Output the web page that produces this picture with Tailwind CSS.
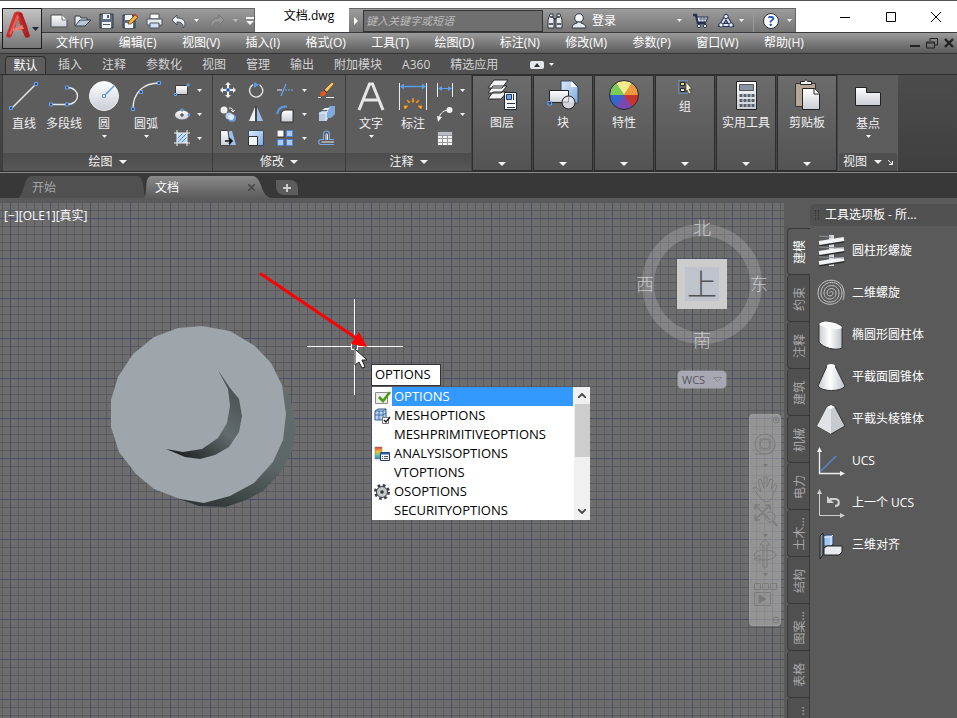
<!DOCTYPE html>
<html lang="zh-CN">
<head>
  <meta charset="UTF-8" />
  <meta name="viewport" content="width=device-width, initial-scale=1.0" />
  <title>文档.dwg</title>
  <script src="https://cdn.jsdelivr.net/npm/@tailwindcss/browser@4"></script>
</head>
<body class="h-screen overflow-hidden flex flex-col bg-[#5a5a5a] font-['Open_Sans','Noto_Sans_CJK_SC',sans-serif] text-xs leading-4 text-[#f0f0f0] select-none">

  <!-- shared shapes -->
  <svg class="absolute h-0 w-0">
    <defs>
      <symbol id="caret" viewBox="0 0 6 4" preserveAspectRatio="none"><path d="M0 0h6L3 4z" fill="#f4f4f4"/></symbol>
      <linearGradient id="white" x1="0" y1="0" x2="0" y2="1"><stop offset="0" stop-color="#fff"/><stop offset="1" stop-color="#c9cdd5"/></linearGradient>
      <linearGradient id="blue" x1="0" y1="0" x2="1" y2="1"><stop offset="0" stop-color="#dcebfa"/><stop offset="1" stop-color="#7fa9dd"/></linearGradient>
      <linearGradient id="metal" x1="0" y1="0" x2="1" y2="0"><stop offset="0" stop-color="#c8ccd1"/><stop offset=".45" stop-color="#fff"/><stop offset="1" stop-color="#bcc1c7"/></linearGradient>
      <linearGradient id="rust" x1="0" y1="0" x2="1" y2="1"><stop offset="0" stop-color="#e8453c"/><stop offset="1" stop-color="#a01a1e"/></linearGradient>
      <linearGradient id="heat" x1="0" y1="0" x2="0" y2="1"><stop offset="0" stop-color="#d93a30"/><stop offset=".4" stop-color="#efc63a"/><stop offset=".7" stop-color="#5cc0a0"/><stop offset="1" stop-color="#3f6fd0"/></linearGradient>
    </defs>
  </svg>

  <header class="flex h-[53px] shrink-0 border-t border-[#555] bg-white">
    <button aria-label="应用程序菜单" class="ml-[2px] mt-[7px] flex h-[41px] w-10 shrink-0 items-center border border-[#1c1c1c] bg-linear-to-b from-[#c4c4c4] to-[#777] z-10">
      <svg class="h-[30px] w-[26px] ml-[2px] -mt-[7px]" viewBox="0 0 26 30">
        <path d="M9 3c2-2 6-2 8 0l8 23c-1 2-4 2-5 1l-3-7H9l-3 7c-1 1-3 1-5-1z" fill="url(#rust)"/>
        <path d="M13 9l3 8-6 1z" fill="#8f8f8f"/>
        <path d="M14 3L6 27l-3 0L11 3z" fill="#c3292b"/>
        <path d="M13 3l8 17 3 5-2-9-5-13z" fill="#b32023"/>
        <path d="M8 19l9-4 2 4-11 2z" fill="#ef7a70"/>
        <path d="M12 4L4 24l2 1L14 7z" fill="#f0857c" opacity=".6"/>
      </svg>
      <svg class="h-1 w-[7px] ml-px" viewBox="0 0 7 4"><path d="M0 0h7L3.500 4z" fill="#222a36"/></svg>
    </button>

    <div class="flex flex-1 flex-col">
      <!-- title bar -->
      <div class="flex h-[31px] items-end">
        <div class="flex h-6 w-[213px] shrink-0 items-center border-t border-r border-[#666] bg-linear-to-b from-[#9c9c9c] to-[#757575] pl-2">
          <button aria-label="新建"><svg class="h-4 w-[18px]" viewBox="0 0 18 16"><path d="M1 2h11l5 5v7H1z" fill="url(#white)" stroke="#4a4a4a"/><path d="M12 2v5h5" fill="#fff" stroke="#777"/></svg></button>
          <button aria-label="打开" class="ml-[6px]"><svg class="h-4 w-[18px]" viewBox="0 0 18 16"><path d="M1 13V3h5l1 2h6v3" fill="#e8ebf0" stroke="#333c48"/><path d="M1 13l5-6h11l-6 6z" fill="#b9c6d6" stroke="#333c48"/></svg></button>
          <button aria-label="保存" class="ml-[7px]"><svg class="h-4 w-[15px]" viewBox="0 0 15 16"><path d="M1 1h13v14H1z" fill="#5f6e80" stroke="#2f3945"/><path d="M4 1h7v5H4zM3 9h9v6H3z" fill="#f2f3f5"/><path d="M8 2h2v3H8zM4 11h7v1H4z" fill="#4d5a6a"/></svg></button>
          <button aria-label="另存为" class="ml-2"><svg class="h-4 w-4" viewBox="0 0 16 16"><path d="M1 2h12v13H1z" fill="#5f6e80" stroke="#2f3945"/><path d="M3 2h7v5H3zM3 10h8v5H3z" fill="#f2f3f5"/><path d="M6 11l1-3 6-6 3 2-7 7z" fill="#f6b13c" stroke="#5a3a14" stroke-width=".7"/><path d="M12 2l1-2 3 3-1 1z" fill="#d5473c"/></svg></button>
          <button aria-label="打印" class="ml-2"><svg class="h-4 w-[17px]" viewBox="0 0 17 16"><path d="M4 1h9v5H4z" fill="#fff" stroke="#555"/><path d="M1 6h15v6H1z" fill="#e6e9ee" stroke="#4c5560"/><path d="M4 10h9v5H4z" fill="#cfe0f4" stroke="#4c5560"/></svg></button>
          <button aria-label="放弃" class="ml-2"><svg class="h-4 w-[15px]" viewBox="0 0 15 16"><path d="M1 7l5-5v3c5 0 8 2 8 6 0 2-1 3-2 4 1-4-2-6-6-6v3z" fill="#eef0f4" stroke="#434c58"/></svg></button>
          <svg class="ml-2 h-[3px] w-[5px]"><use href="#caret"/></svg>
          <button aria-label="重做" class="ml-[11px]"><svg class="h-4 w-[15px]" viewBox="0 0 15 16"><path d="M14 7L9 2v3C4 5 1 7 1 11c0 2 1 3 2 4-1-4 2-6 6-6v3z" fill="#979797" stroke="#777"/></svg></button>
          <svg class="ml-2 h-[3px] w-[5px] opacity-50"><use href="#caret"/></svg>
          <svg class="ml-2 h-2 w-2" viewBox="0 0 8 8"><path d="M0 0h8v2H0zM0 4h8L4 8z" fill="#f4f4f4"/></svg>
        </div>
        <h1 class="flex h-8 w-[94px] shrink-0 items-center justify-center pl-[14px] text-black">文档.dwg</h1>
        <div class="flex h-6 w-[447px] shrink-0 items-center border-t border-r border-[#666] bg-linear-to-b from-[#9c9c9c] to-[#757575]">
          <button aria-label="展开搜索" class="flex w-[14px] justify-center"><svg class="h-2 w-1" viewBox="0 0 4 8"><path d="M0 0l4 4-4 4z" fill="#fff"/></svg></button>
          <input aria-label="搜索" placeholder="键入关键字或短语" class="h-[22px] w-[180px] border border-[#333] bg-[#6f6f6f] px-[2px] text-[11px] italic placeholder:text-[#bdbdbd]" />
          <button aria-label="查找" class="ml-1"><svg class="h-4 w-4" viewBox="0 0 16 16"><path d="M3 1h3v3l1 2v9H1V7zM13 1h-3v3L9 6v9h6V7z" fill="#e6e8ec" stroke="#2d333b"/><path d="M2 11h4M10 11h4M7 6h2M3 4h3M10 4h3" stroke="#2d333b" stroke-width="1.500"/></svg></button>
          <button class="ml-2 flex items-center gap-[5px] text-white"><svg class="h-4 w-4" viewBox="0 0 16 16"><circle cx="8" cy="5" r="4.300" fill="#f5f6f8" stroke="#2f3844"/><path d="M6 9v1c-3 1-5 2-5 5h14c0-3-2-4-5-5V9z" fill="#e6e9ee" stroke="#2f3844"/></svg>登录</button>
          <svg class="ml-[61px] h-[3px] w-[5px]"><use href="#caret"/></svg>
          <button aria-label="应用商店" class="ml-[11px]"><svg class="h-4 w-4" viewBox="0 0 16 16" fill="none" stroke="#26324f"><path d="M0 2h3l2 8h8" stroke-width="2.500"/><path d="M4 4h11l-2 5H5z" fill="#dfe4ee"/><path d="M6 6h8M8 4v5M11 4v5" stroke-width=".6"/><circle cx="6" cy="13" r="1.600" fill="#fff"/><circle cx="12" cy="13" r="1.600" fill="#fff"/></svg></button>
          <button aria-label="Autodesk A360" class="ml-[9px]"><svg class="h-4 w-4" viewBox="0 0 16 16" stroke="#26324f"><path d="M8 4L3 12h10z" fill="none" stroke-width="4"/><path d="M8 4L3 12h10z" fill="none" stroke="#dfe6f2" stroke-width="2"/><circle cx="8" cy="3.500" r="2.200" fill="#e8edf6"/><circle cx="3" cy="12" r="2.200" fill="#e8edf6"/><circle cx="13" cy="12" r="2.200" fill="#e8edf6"/></svg></button>
          <svg class="ml-[5px] h-[3px] w-[5px]"><use href="#caret"/></svg>
          <div class="ml-[9px] h-[22px] w-px bg-[#9a9a9a]"></div>
          <button aria-label="帮助" class="ml-[9px] flex h-4 w-4 items-center justify-center rounded-full border border-[#2b2f38] bg-white text-sm font-bold leading-4 text-[#2355c0]">?</button>
          <svg class="ml-2 h-[3px] w-[5px]"><use href="#caret"/></svg>
        </div>
        <div class="ml-auto flex h-[30px] gap-[2px] text-black">
          <button aria-label="最小化" class="flex w-11 items-center justify-center"><svg class="h-[10px] w-[10px]" viewBox="0 0 10 10"><path d="M0 5.500h10" stroke="#000"/></svg></button>
          <button aria-label="最大化" class="flex w-11 items-center justify-center"><svg class="h-[10px] w-[10px]" viewBox="0 0 10 10"><path d="M.5.500h9v9h-9z" fill="none" stroke="#000"/></svg></button>
          <button aria-label="关闭" class="flex w-[42px] items-center justify-center"><svg class="h-[10px] w-[10px]" viewBox="0 0 10 10"><path d="M0 0l10 10M10 0L0 10" stroke="#000"/></svg></button>
        </div>
      </div>
      <!-- menu bar -->
      <nav class="-ml-[42px] flex h-[21px] items-center border-t border-[#3a3a3a] bg-linear-to-b from-[#9b9b9b] to-[#5c5c5c] pl-14 pr-[3px] text-white whitespace-nowrap">
        <div class="flex w-[748px] justify-between">
          <button>文件(F)</button><button>编辑(E)</button><button>视图(V)</button><button>插入(I)</button><button>格式(O)</button><button>工具(T)</button><button>绘图(D)</button><button>标注(N)</button><button>修改(M)</button><button>参数(P)</button><button>窗口(W)</button><button>帮助(H)</button>
        </div>
        <div class="ml-auto flex items-center gap-[6px]">
          <button aria-label="最小化文档"><svg class="h-3 w-[10px]" viewBox="0 0 10 12"><path d="M0 9h10" stroke="#222" stroke-width="2"/></svg></button>
          <button aria-label="还原文档"><svg class="h-3 w-3" viewBox="0 0 12 12" fill="none" stroke="#222"><path d="M4 4V1.500h7.500V8H9M4 1.500h7.500M.5 5h8v6h-8zM.5 6h8"/></svg></button>
          <button aria-label="关闭文档"><svg class="h-[10px] w-[10px]" viewBox="0 0 10 10"><path d="M1 1l8 8M9 1L1 9" stroke="#222" stroke-width="2.400"/></svg></button>
        </div>
      </nav>
    </div>
  </header>

  <!-- ribbon tabs -->
  <nav class="flex h-[21px] shrink-0 items-center gap-5 border-t border-[#363636] bg-[#525252] pl-[5px] pt-px text-[#d2d2d2] whitespace-nowrap">
    <button class="-mr-2 flex h-[18px] w-[41px] items-center justify-center self-end rounded-t-sm border border-b-0 border-[#2e2e2e] bg-[#5d5d5d] text-white">默认</button>
    <button>插入</button><button>注释</button><button>参数化</button><button>视图</button><button>管理</button><button>输出</button><button>附加模块</button><button>A360</button><button>精选应用</button>
    <button aria-label="最小化功能区" class="ml-3 flex items-center gap-[5px]"><svg class="h-2 w-[14px]" viewBox="0 0 14 8"><rect width="14" height="8" rx="2" fill="#e4e8ee"/><path d="M4 6h6L7 2z" fill="#333"/></svg><svg class="h-[3px] w-[5px]"><use href="#caret"/></svg></button>
  </nav>

  <!-- ribbon panels -->
  <main class="flex h-[98px] shrink-0 border-t border-b border-t-[#2e2e2e] border-b-[#2b2b2b] bg-linear-to-b from-[#4c4c4c] to-[#3f3f3f] pl-[2px]">
    <section class="flex w-[211px] flex-col border-l border-r border-[#3c3c3c] bg-[#5d5d5d]">
      <div class="flex flex-1 pt-[5px] pl-px">
        <button class="flex w-10 flex-col items-center"><svg class="h-8 w-8" viewBox="0 0 32 32" fill="none"><path d="M4 28L28 4" stroke="#e8e8e8" stroke-width="1.400"/><path d="M1.500 26.500h3v3h-3zM26.500 2.500h3v3h-3z" fill="#2e4a73" stroke="#6aa5f5"/></svg><span class="mt-1 whitespace-nowrap">直线</span></button>
        <button class="flex w-10 flex-col items-center"><svg class="h-8 w-8" viewBox="0 0 32 32" fill="none"><path d="M3 24.500h16c14 0 14-17 0-17" stroke="#e8e8e8" stroke-width="1.400"/><path d="M1.500 23h3v3h-3zM17.500 23h3v3h-3zM17.500 6h3v3h-3z" fill="#2e4a73" stroke="#6aa5f5"/></svg><span class="mt-1 whitespace-nowrap">多段线</span></button>
        <button class="flex w-10 flex-col items-center"><svg class="h-8 w-8" viewBox="0 0 32 32"><circle cx="16" cy="16" r="14.500" fill="url(#white)" stroke="#f0f0f0"/><path d="M16 16L26 6" stroke="#5b98ea" stroke-width="1.500"/><path d="M14.500 14.500h3v3h-3z" fill="#fff" stroke="#5b98ea"/></svg><span class="mt-1">圆</span><svg class="mt-[3px] h-[3px] w-[5px]"><use href="#caret"/></svg></button>
        <button class="flex w-11 flex-col items-center"><svg class="h-8 w-8" viewBox="0 0 32 32" fill="none"><path d="M3 29C3 13 13 3 29 3" stroke="#e8e8e8" stroke-width="1.400"/><path d="M1.500 27.500h3v3h-3zM9.500 10.500h3v3h-3zM27.500 1.500h3v3h-3z" fill="#2e4a73" stroke="#6aa5f5"/></svg><span class="mt-1">圆弧</span><svg class="mt-[3px] h-[3px] w-[5px]"><use href="#caret"/></svg></button>
        <div class="ml-1 grid grid-cols-[20px_14px] auto-rows-[24px] -mt-[2px] place-items-center">
          <svg class="h-4 w-4" viewBox="0 0 16 16"><path d="M1.500 3.500h12v9h-12z" fill="url(#white)" stroke="#3a3a3a"/><path d="M.5 11.500h2v2h-2zM13 2h2v2h-2z" fill="#2e4a73" stroke="#6aa5f5"/></svg><svg class="h-[3px] w-[5px]"><use href="#caret"/></svg>
          <svg class="h-4 w-4" viewBox="0 0 16 16"><ellipse cx="8" cy="9" rx="7" ry="4.500" fill="url(#white)"/><path d="M6 9h4M8 7v4" stroke="#333"/><path d="M7 3h2v2H7zM14 8h1.500v2H14z" fill="#2e4a73" stroke="#6aa5f5"/></svg><svg class="h-[3px] w-[5px]"><use href="#caret"/></svg>
          <svg class="h-4 w-4" viewBox="0 0 16 16"><path d="M3 3h10v10H3z" fill="#c3dcf8"/><path d="M3 9l6-6M3 13L13 3M7 13l6-6" stroke="#4f86d8"/><path d="M3 0v16M13 0v16M0 3h16M0 13h16" stroke="#f2f2f2"/></svg><svg class="h-[3px] w-[5px]"><use href="#caret"/></svg>
        </div>
      </div>
      <button class="flex h-[18px] items-center justify-center gap-[6px] bg-linear-to-b from-[#4c4c4c] to-[#575757]">绘图<svg class="h-1 w-2"><use href="#caret"/></svg></button>
    </section>

    <section class="flex w-[133px] flex-col border-r border-[#3c3c3c] bg-[#5d5d5d]">
      <div class="grid flex-1 grid-cols-[28px_28px_30px_8px_36px] auto-rows-[24px] place-items-center pl-px pt-[3px]">
        <svg class="h-4 w-4" viewBox="0 0 16 16"><path d="M8 0l3 3H9v3H7V3H5zM8 16l3-3H9v-3H7v3H5zM0 8l3-3v2h3v2H3v2zM16 8l-3-3v2h-3v2h3v2z" fill="#eee"/><path d="M6.500 6.500h3v3h-3z" fill="#2e4a73" stroke="#6aa5f5"/></svg>
        <svg class="h-4 w-4" viewBox="0 0 16 16"><path d="M11.500 2.800A6.600 6.600 0 1 1 5 2.700" fill="none" stroke="#e4e4e4" stroke-width="1.400"/><path d="M6 0l5 2.500L6 6z" fill="#5b98ea"/></svg>
        <svg class="h-4 w-4" viewBox="0 0 16 16"><path d="M0 8h5" stroke="#eee"/><path d="M4 14L9 2M8 8h2M11 8h2M14 8h2" stroke="#6aa5f5" stroke-width="1.200"/></svg>
        <svg class="h-[3px] w-[5px]"><use href="#caret"/></svg>
        <svg class="h-4 w-4" viewBox="0 0 16 16"><path d="M0 15.500h3M8 15.500h8" stroke="#eee"/><path d="M6 8l8-8 2 2-7 8z" fill="#f7c662" stroke="#523413" stroke-width=".6"/><path d="M2 14l1-4 4-2 2 3-3 3z" fill="#dd5a1e"/><path d="M6 8l3 3" stroke="#2b2b2b"/></svg>

        <svg class="h-4 w-4" viewBox="0 0 16 16"><circle cx="4" cy="4" r="3.500" fill="#eef0f3"/><circle cx="9" cy="10" r="3.500" fill="#b5cdeb"/><circle cx="12" cy="12" r="4" fill="#6c99d8"/><circle cx="11" cy="11" r="3" fill="#dce9f8"/><path d="M9 2c3 0 4 1 4 3m-2-1l2 2 2-2" fill="none" stroke="#eee"/></svg>
        <svg class="h-4 w-4" viewBox="0 0 16 16"><path d="M7 1v14H1z" fill="#eef0f3"/><path d="M9 1v14h6z" fill="#9cbde8"/><path d="M8 0v16" stroke="#333"/></svg>
        <svg class="h-[18px] w-[18px]" viewBox="0 0 18 18"><path d="M5 17V10c0-3 2-5 6-5h6v12z" fill="url(#white)" stroke="#2e2e2e"/><path d="M1 9C2 4 5 1 11 1.500" fill="none" stroke="#5b98ea" stroke-width="2"/></svg>
        <svg class="h-[3px] w-[5px]"><use href="#caret"/></svg>
        <svg class="h-4 w-[17px]" viewBox="0 0 17 16"><path d="M1 7l3-2h6v8l-2 2H1z" fill="#b7cbe3"/><path d="M9 3l3-3h5v8l-4 4H9z" fill="#82a9dc"/><path d="M1 7h7v8M8 7l2-2" stroke="#eef3fa" fill="none"/><path d="M4 4h6l2-2H7z" fill="#e9eff7"/></svg>

        <svg class="h-4 w-4" viewBox="0 0 16 16"><path d="M9 1h3l4 14H9z" fill="#9cc0ee"/><path d="M.5.500H8l2 15H.5z" fill="url(#white)" stroke="#444"/><path d="M5 11h7M9 8l3 3-3 3" stroke="#111" stroke-width="1.600" fill="none"/></svg>
        <svg class="h-4 w-4" viewBox="0 0 16 16"><path d="M.5.500h15v15H.5z" fill="url(#blue)" stroke="#3a4a60"/><path d="M.5 6.500h9v9h-9z" fill="#f3f4f6" stroke="#333"/></svg>
        <svg class="h-4 w-4" viewBox="0 0 16 16"><path d="M0 0h7v7H0z" fill="#fff" stroke="#3a3a3a"/><path d="M9.500.500h6v6h-6zM.5 9.500h6v6h-6zM9.500 9.500h6v6h-6z" fill="#a9c8f2" stroke="#4c84d8"/></svg>
        <svg class="h-[3px] w-[5px]"><use href="#caret"/></svg>
        <svg class="h-4 w-4" viewBox="0 0 16 16" fill="none"><path d="M16 14.500H3c-3 0-3-5 0-5h2.500V4c0-4 6-4 6 0v5.500H16" stroke="#76a8ee" stroke-width="1.200"/><path d="M16 12H3.500M8 10V4.500c0-1 1.500-1 1.500 0V10" stroke="#eee"/></svg>
      </div>
      <button class="flex h-[18px] items-center justify-center gap-[6px] bg-linear-to-b from-[#4c4c4c] to-[#575757]">修改<svg class="h-1 w-2"><use href="#caret"/></svg></button>
    </section>

    <section class="flex w-[125px] flex-col bg-[#5d5d5d]">
      <div class="flex flex-1 pl-1 pt-[5px]">
        <button class="flex w-[42px] flex-col items-center"><svg class="h-8 w-8" viewBox="0 0 32 32"><path d="M4 30L14.500 4h3L28 30M8 20h16" fill="none" stroke="#e6e6e6" stroke-width="3"/></svg><span class="mt-1">文字</span><svg class="mt-[3px] h-[3px] w-[5px]"><use href="#caret"/></svg></button>
        <button class="flex w-[42px] flex-col items-center"><svg class="h-8 w-8" viewBox="0 0 32 32"><path d="M2.500 3v27M29.500 3v27" stroke="#eee"/><path d="M4 6.500h24" stroke="#5b9cf5" stroke-width="1.500"/><path d="M3 6.500l4-3v6zM29 6.500l-4-3v6z" fill="#5b9cf5"/><path d="M16 18l-1 4h2zM10 20l2 3 1-1zM22 20l-2 3-1-1zM7 26l4 0-3 3zM25 26l-4 0 3 3z" fill="#ffc02a" stroke="#f08a14"/></svg><span class="mt-1">标注</span></button>
        <div class="-mt-[2px] grid auto-rows-[24px] grid-cols-[22px_12px] place-items-center">
          <svg class="h-4 w-4" viewBox="0 0 16 16"><path d="M.5 1v14M15.500 1v14" stroke="#eee"/><path d="M2 6.500h12" stroke="#5b9cf5"/><path d="M1 6.500l4-2.500v5zM15 6.500l-4-2.500v5z" fill="#5b9cf5"/></svg><svg class="h-[3px] w-[5px]"><use href="#caret"/></svg>
          <svg class="h-4 w-4" viewBox="0 0 16 16"><path d="M2 12c1-4 3-7 9-8" fill="none" stroke="#eee"/><circle cx="12.500" cy="4" r="3" fill="#f4f4f4"/><path d="M0 10l5 1-4 5z" fill="#eee"/></svg><svg class="h-[3px] w-[5px]"><use href="#caret"/></svg>
          <svg class="h-[15px] w-4" viewBox="0 0 16 15"><path d="M.5.500h15v14H.5z" fill="#f4f4f4" stroke="#666"/><path d="M1 1h14v3H1z" fill="#b9bec6"/><path d="M1 4.500h14M1 7.500h14M1 11.500h14M5.500 4v10M10.500 4v10" stroke="#999"/></svg>
        </div>
      </div>
      <button class="flex h-[18px] items-center justify-center gap-[6px] bg-linear-to-b from-[#4c4c4c] to-[#575757]">注释<svg class="h-1 w-2"><use href="#caret"/></svg></button>
    </section>

    <div class="flex gap-px bg-[#454545] pl-px pr-px">
      <button class="flex w-[60px] flex-col items-center border border-[#2e2e2e] bg-linear-to-b from-[#6c6c6c] to-[#535353] pt-[3px]">
        <svg class="h-8 w-8" viewBox="0 0 32 32"><path d="M2 20l5-7h14l-6 7zM2 14l5-7h14l-6 7zM2 9l6-8h14l-6 8z" fill="#f4f5f7" stroke="#2c2c2c"/><path d="M18.500 13.500h12v17h-12z" fill="#f2f4f8" stroke="#1f2733"/><path d="M20.500 15.500h5v5h-5z" fill="#6fa2ea" stroke="#1f3a66"/><path d="M27.500 15v6M21 24.500h8M21 28.500h8" stroke="#333"/></svg>
        <span class="mt-1">图层</span><svg class="mt-auto mb-1 h-1 w-2"><use href="#caret"/></svg></button>
      <button class="flex w-[60px] flex-col items-center border border-[#2e2e2e] bg-linear-to-b from-[#6c6c6c] to-[#535353] pt-[3px]">
        <svg class="h-8 w-8" viewBox="0 0 32 32"><path d="M14 2h11l6 6v16H14z" fill="url(#blue)" stroke="#33485f"/><path d="M24 2v6h6" fill="#fff"/><path d="M2.500 11.500h19v12h-19z" fill="url(#white)" stroke="#222"/><circle cx="21.500" cy="23.500" r="6.500" fill="#e6e9ee" fill-opacity=".85" stroke="#222"/><path d="M16 23h5.500v-6" fill="none" stroke="#888" stroke-width=".7"/><path d="M1 22.500h3.500v3.500H1z" fill="#2e4a73" stroke="#6aa5f5"/></svg>
        <span class="mt-1">块</span><svg class="mt-auto mb-1 h-1 w-2"><use href="#caret"/></svg></button>
      <button class="flex w-[60px] flex-col items-center border border-[#2e2e2e] bg-linear-to-b from-[#6c6c6c] to-[#535353] pt-[3px]">
        <svg class="h-8 w-8" viewBox="0 0 32 32"><path d="M16 16L8 4A14 14 0 0 1 24 4z" fill="#f3ea8c"/><path d="M16 16l8-12a14 14 0 0 1 6 12z" fill="#ee9a3a"/><path d="M16 16h14a14 14 0 0 1-6 12z" fill="#c8352f"/><path d="M16 16l8 12a14 14 0 0 1-16 0z" fill="#7a48b4"/><path d="M16 16L8 28A14 14 0 0 1 2 16z" fill="#3566cc"/><path d="M16 16H2A14 14 0 0 1 8 4z" fill="#7ccc5a"/><circle cx="16" cy="16" r="14.500" fill="none" stroke="#2a2a2a"/></svg>
        <span class="mt-1">特性</span><svg class="mt-auto mb-1 h-1 w-2"><use href="#caret"/></svg></button>
      <button class="flex w-[60px] flex-col items-center border border-[#2e2e2e] bg-linear-to-b from-[#6c6c6c] to-[#535353] pt-[3px]">
        <svg class="h-4 w-4" viewBox="0 0 16 16"><path d="M1.500 1.500h9v13h-9z" fill="none" stroke="#6aa5f5" stroke-dasharray="1 1"/><path d="M3.500 3.500h4v3h-4z" fill="#f0de6a" stroke="#222"/><path d="M3.500 9.500h4v3h-4z" fill="#e8ecf4" stroke="#222"/><path d="M9 3l6 7h-3l2 4-2 1-2-4-1 2z" fill="#fbf6c8" stroke="#222" stroke-width=".6"/></svg>
        <span class="mt-1">组</span><svg class="mt-auto mb-1 h-1 w-2"><use href="#caret"/></svg></button>
      <button class="flex w-[60px] flex-col items-center border border-[#2e2e2e] bg-linear-to-b from-[#6c6c6c] to-[#535353] pt-[3px]">
        <svg class="h-8 w-8" viewBox="0 0 32 32"><path d="M6.500 2.500h20v28h-20z" fill="url(#white)" stroke="#222"/><path d="M9.500 5.500h14v6h-14z" fill="#8a93a0" stroke="#555"/><path d="M11 15v14M15 15v14M19 15v14M23 15v14" stroke="#59616c" stroke-width="3" stroke-dasharray="3 2"/></svg>
        <span class="mt-1 whitespace-nowrap">实用工具</span><svg class="mt-auto mb-1 h-1 w-2"><use href="#caret"/></svg></button>
      <button class="flex w-[60px] flex-col items-center border border-[#2e2e2e] bg-linear-to-b from-[#6c6c6c] to-[#535353] pt-[3px]">
        <svg class="h-8 w-8" viewBox="0 0 32 32"><path d="M4.500 4.500h20v23h-20z" fill="#b5a696" stroke="#3a332c"/><path d="M9.500 2.500h4c0-2 3-2 3 0h4v3h-11z" fill="#f4f4f4" stroke="#222"/><path d="M11.500 9.500h12l5 5v16h-17z" fill="url(#white)" stroke="#222"/><path d="M23 9.500v5.500h5.500" fill="#fff" stroke="#222"/></svg>
        <span class="mt-1 whitespace-nowrap">剪贴板</span><svg class="mt-auto mb-1 h-1 w-2"><use href="#caret"/></svg></button>
    </div>

    <section class="flex w-[60px] flex-col bg-[#5d5d5d]">
      <button class="flex flex-1 flex-col items-center pt-[5px]"><svg class="h-8 w-8" viewBox="0 0 32 32"><path d="M3.500 7.500h11v5h14v13h-25z" fill="url(#white)" stroke="#222"/></svg><span class="mt-1">基点</span><svg class="mt-[3px] h-[3px] w-[5px]"><use href="#caret"/></svg></button>
      <button class="mx-px flex h-[18px] items-center justify-between bg-[#4f4f4f] px-1">视图<svg class="h-1 w-2"><use href="#caret"/></svg><svg class="h-[5px] w-[5px]" viewBox="0 0 5 5"><path d="M0 0l4 4M4.500 1v3.500H1" stroke="#f0f0f0" fill="none"/></svg></button>
    </section>
  </main>

  <!-- drawing file tabs -->
  <nav class="flex h-[26px] shrink-0 items-end border-t border-[#8c8c8c] bg-[#383838] pl-[18px]">
    <button class="relative flex h-[22px] w-[128px] items-center pl-[14px] pt-px text-[#a5a5a5]">
      <svg class="absolute inset-0 h-full w-full" viewBox="0 0 128 22" preserveAspectRatio="none"><path d="M0 22C6 20 5 2 13 0H120c7 2 5 20 8 22z" fill="#505050"/></svg><span class="relative">开始</span>
    </button>
    <button class="relative -ml-[3px] flex h-[22px] w-[128px] items-center justify-between pl-3 pr-4 pt-px text-white">
      <svg class="absolute inset-0 h-full w-full" viewBox="0 0 128 22" preserveAspectRatio="none"><defs><linearGradient id="tab" x1="0" y1="0" x2="0" y2="1"><stop offset="0" stop-color="#8a8a8a"/><stop offset="1" stop-color="#5c5c5c"/></linearGradient></defs><path d="M0 22C6 20 0 2 8 0H110c10 2 7 20 18 22z" fill="url(#tab)"/></svg>
      <span class="relative">文档</span>
      <svg class="relative h-[7px] w-[7px]" viewBox="0 0 7 7"><path d="M0 0l7 7M7 0L0 7" stroke="#444" stroke-width="1.500"/></svg>
    </button>
    <button aria-label="新图形" class="mb-[3px] ml-[5px] flex h-[15px] w-[22px] items-center justify-center rounded-tr-lg rounded-bl-lg bg-[#5c5c5c]"><svg class="h-2 w-2" viewBox="0 0 8 8"><path d="M4 0v8M0 4h8" stroke="#ccc" stroke-width="2"/></svg></button>
  </nav>

  <div class="flex min-h-0 flex-1 pt-1">
    <!-- drawing area -->
    <div class="relative min-w-0 flex-1 overflow-hidden bg-[#6d6d6e]">
      <svg class="absolute inset-0 h-full w-full">
        <g id="grid"></g>
        <defs>
          <linearGradient id="side" x1="280" y1="100" x2="200" y2="310" gradientUnits="userSpaceOnUse"><stop offset="0" stop-color="#3e4648"/><stop offset=".3" stop-color="#66706f"/><stop offset=".7" stop-color="#5b6566"/><stop offset="1" stop-color="#2c3133"/></linearGradient>
          <linearGradient id="notch" x1="230" y1="170" x2="168" y2="248" gradientUnits="userSpaceOnUse"><stop offset="0" stop-color="#434a4c"/><stop offset=".5" stop-color="#626c6e"/><stop offset="1" stop-color="#1d2022"/></linearGradient>
        </defs>
        <path d="M270 161l13 22 8 15 5 27-4 24-11 21-18 19-17 9-20 7-27-1-20-7z" fill="url(#side)"/>
        <path d="M202 124l28 5 25 15 16 17 11 22 4 29-3 26-10 22-19 21-24 13-26 7-24-4-26-10-18-15-17-22-8-25v-27l7-23 15-23 21-17 24-9z" fill="#9ea6ab"/>
        <path d="M218 168l12 18 9 11 3 17-3 16-10 15-14 8-15 4-15-2-19-8 17 3 19-3 16-11 9-15 3-17-2-17z" fill="url(#notch)"/>
        <path d="M307 144.500h44M358 144.500h45M354.500 97v44M354.500 148v45M351.500 141.500h6v6h-6z" fill="none" stroke="#fff"/>
        <path d="M261 72l98 66" stroke="#fe0000" stroke-width="3" stroke-linecap="round"/>
        <path d="M367 145l-16-3 8-12z" fill="#fe0000"/>
        <path d="M355 147v16l4-3 3 6 3-1-3-7h5z" fill="#fff" stroke="#222"/>
      </svg>

      <button class="absolute left-1 top-[6px] text-white">[−][OLE1][真实]</button>

      <!-- view cube -->
      <div class="absolute right-[15px] top-[14px] grid grid-cols-[20px_94px_20px] grid-rows-[24px_88px_24px] place-items-center text-lg leading-5 text-[#c0c0c0] font-light">
        <div class="absolute h-[120px] w-[120px] rounded-full border-12 border-white/17"></div>
        <span class="col-start-2">北</span>
        <span class="col-start-1 row-start-2">西</span>
        <button class="col-start-2 row-start-2 flex h-[50px] w-[50px] items-center justify-center border-8 border-[#cdcdcd] bg-[#bfc3cb] text-3xl font-light text-[#505258]">上</button>
        <span class="col-start-3 row-start-2">东</span>
        <span class="col-start-2 row-start-3">南</span>
      </div>
      <button class="absolute right-[58px] top-[169px] flex h-[17px] w-12 items-center justify-around rounded bg-[#a8a8b2] text-[11px] text-[#55555f] ring-1 ring-white/20">WCS<svg class="h-[5px] w-[9px]" viewBox="0 0 9 5"><path d="M.5.500h8l-4 4z" fill="none" stroke="#888"/></svg></button>

      <!-- navigation bar -->
      <div class="absolute right-[3px] top-[212px] flex h-[212px] w-8 flex-col items-center rounded border border-[#aaa]/50 bg-[#b4b4b4]/55">
        <svg class="h-[210px] w-[30px]" viewBox="0 0 30 210" fill="none" stroke="#7c7c7c">
          <circle cx="26" cy="5" r="3"/><path d="M25 4l2 2M27 4l-2 2"/>
          <circle cx="15" cy="29" r="10"/><circle cx="15" cy="29" r="5"/><path d="M5 39h10c6 0 10-4 10-10M10 24h10v10H10z"/>
          <path d="M13 49h5l-2.500 3zM13 119h5l-2.500 3zM13 158h5l-2.500 3z" fill="#777" stroke="none"/>
          <path d="M10 82l-7-9 3-1 5 5-3-12 3-1 3 9V62h3v10l3-8 3 1-2 10 4-6 2 2-5 12c-2 5-8 5-12-1z"/>
          <path d="M5 90l15 15M20 90L5 105M5 95v-5h5M15 90h5v5M5 100v5h5" stroke-width="1.500"/><circle cx="20" cy="102" r="5"/><path d="M23 106l4 5" stroke-width="2"/>
          <path d="M13 152v-22h-3l5-6 5 6h-3v22z"/><ellipse cx="15" cy="140" rx="11" ry="5"/><path d="M4 144l6-4v7z"/>
          <path d="M4.500 168.500h6v6h-6zM12.500 168.500h6v6h-6zM20.500 168.500h6v6h-6zM4.500 177.500h16v13h-16z"/><path d="M9 180l7 4-7 4z" fill="#777"/>
          <circle cx="26" cy="205" r="3"/><path d="M24 205h4"/>
        </svg>
      </div>

      <!-- dynamic input -->
      <input aria-label="命令" value="OPTIONS" class="absolute left-[371px] top-[162px] h-[22px] w-[70px] border border-[#333] bg-white px-[3px] pb-[2px] text-[13px] text-black" />
      <div class="absolute left-[372px] top-[185px] flex w-[218px] bg-white text-[13px] leading-[19px] text-black">
        <ul class="flex-1">
          <li class="flex h-[19px]"><svg class="m-[2px] mr-0 h-4 w-[18px]" viewBox="0 0 18 16"><path d="M1.500 3.500h12v11h-12z" fill="#ececec" stroke="#8a8a8a"/><path d="M5 8l4 4 7-9" fill="none" stroke="#4a9a10" stroke-width="2.500"/></svg><span class="flex-1 bg-[#3399ff] pl-[2px] text-white">OPTIONS</span></li>
          <li class="flex h-[19px]"><svg class="m-[2px] mr-0 h-4 w-[18px]" viewBox="0 0 18 16"><path d="M1 3l3-2h8v8l-3 3H1z" fill="#b8d2f2" stroke="#34598c"/><path d="M1 3h8v9M9 3l3-2M5 3v9M1 7h8l3-2" fill="none" stroke="#34598c" stroke-width=".8"/><path d="M8.500 9.500h6v6h-6z" fill="#fff" stroke="#777"/><path d="M10 12l2 2 4-5" fill="none" stroke="#222" stroke-width="1.500"/></svg><span class="pl-[2px]">MESHOPTIONS</span></li>
          <li class="h-[19px] pl-[22px]">MESHPRIMITIVEOPTIONS</li>
          <li class="flex h-[19px]"><svg class="m-[2px] mr-0 h-4 w-[18px]" viewBox="0 0 18 16"><path d="M1 1h7v12H1z" fill="url(#heat)" stroke="#888" stroke-width=".6"/><path d="M6.500 6.500h9v8h-9z" fill="#f6f8fb" stroke="#1f3a66"/><path d="M6.500 7.500h9" stroke="#2f5fa8" stroke-width="2"/><path d="M8 10.500h1M8 12.500h1M10 10.500h4M10 12.500h4" stroke="#555"/></svg><span class="pl-[2px]">ANALYSISOPTIONS</span></li>
          <li class="h-[19px] pl-[22px]">VTOPTIONS</li>
          <li class="flex h-[19px]"><svg class="m-[2px] mr-0 h-4 w-[18px]" viewBox="0 0 18 16"><circle cx="8" cy="8" r="6.500" fill="none" stroke="#3c3f44" stroke-width="3" stroke-dasharray="2.600 2.500"/><circle cx="8" cy="8" r="5.500" fill="#c3c6ca" stroke="#3c3f44"/><circle cx="8" cy="8" r="1.800" fill="#333"/></svg><span class="pl-[2px]">OSOPTIONS</span></li>
          <li class="h-[19px] pl-[22px]">SECURITYOPTIONS</li>
        </ul>
        <div class="ml-px flex w-4 flex-col items-center bg-[#f0f0f0]">
          <svg class="my-[6px] h-[5px] w-2" viewBox="0 0 8 5"><path d="M0 5l4-4 4 4" fill="none" stroke="#444" stroke-width="1.800"/></svg>
          <div class="h-[53px] w-[15px] bg-[#cdcdcd]"></div>
          <svg class="mt-auto mb-[6px] h-[5px] w-2" viewBox="0 0 8 5"><path d="M0 0l4 4 4-4" fill="none" stroke="#444" stroke-width="1.800"/></svg>
        </div>
      </div>
    </div>

    <!-- tool palettes -->
    <aside class="flex w-[173px] shrink-0 pl-[3px]">
      <div class="mt-[26px] flex w-[23px] flex-col text-[#a9a9a9]">
        <button class="flex h-[47px] shrink-0 items-center justify-center rounded-l border border-r-0 border-[#383838] bg-[#5a5a5a] pl-[2px] pt-[2px] text-white"><span class="rotate-180 [writing-mode:vertical-rl] [text-orientation:sideways]">建模</span></button>
        <button class="flex h-[47px] shrink-0 items-center justify-center rounded-l border border-t-0 border-[#383838] bg-[#505050] pl-[2px] pt-[2px]"><span class="rotate-180 [writing-mode:vertical-rl] [text-orientation:sideways]">约束</span></button>
        <button class="flex h-[47px] shrink-0 items-center justify-center rounded-l border border-t-0 border-[#383838] bg-[#505050] pl-[2px] pt-[2px]"><span class="rotate-180 [writing-mode:vertical-rl] [text-orientation:sideways]">注释</span></button>
        <button class="flex h-[47px] shrink-0 items-center justify-center rounded-l border border-t-0 border-[#383838] bg-[#505050] pl-[2px] pt-[2px]"><span class="rotate-180 [writing-mode:vertical-rl] [text-orientation:sideways]">建筑</span></button>
        <button class="flex h-[47px] shrink-0 items-center justify-center rounded-l border border-t-0 border-[#383838] bg-[#505050] pl-[2px] pt-[2px]"><span class="rotate-180 [writing-mode:vertical-rl] [text-orientation:sideways]">机械</span></button>
        <button class="flex h-[47px] shrink-0 items-center justify-center rounded-l border border-t-0 border-[#383838] bg-[#505050] pl-[2px] pt-[2px]"><span class="rotate-180 [writing-mode:vertical-rl] [text-orientation:sideways]">电力</span></button>
        <button class="flex h-[47px] shrink-0 items-center justify-center rounded-l border border-t-0 border-[#383838] bg-[#505050] pl-[2px] pt-[2px]"><span class="rotate-180 [writing-mode:vertical-rl] [text-orientation:sideways]">土木...</span></button>
        <button class="flex h-[47px] shrink-0 items-center justify-center rounded-l border border-t-0 border-[#383838] bg-[#505050] pl-[2px] pt-[2px]"><span class="rotate-180 [writing-mode:vertical-rl] [text-orientation:sideways]">结构</span></button>
        <button class="flex h-[47px] shrink-0 items-center justify-center rounded-l border border-t-0 border-[#383838] bg-[#505050] pl-[2px] pt-[2px]"><span class="rotate-180 [writing-mode:vertical-rl] [text-orientation:sideways]">图案...</span></button>
        <button class="flex h-[47px] shrink-0 items-center justify-center rounded-l border border-t-0 border-[#383838] bg-[#505050] pl-[2px] pt-[2px]"><span class="rotate-180 [writing-mode:vertical-rl] [text-orientation:sideways]">表格</span></button>
        <button class="flex h-[47px] shrink-0 items-start justify-center rounded-l border border-t-0 border-[#383838] bg-[#505050] pl-[2px] pt-2"><span class="rotate-180 [writing-mode:vertical-rl] [text-orientation:sideways]">...</span></button>
      </div>
      <div class="flex-1 text-white">
        <h2 class="mt-[2px] flex h-[22px] items-center gap-[6px] rounded-l bg-[#505050] pl-[5px] whitespace-nowrap"><span class="h-[10px] w-1 border-x border-dotted border-[#333]"></span>工具选项板 - 所...</h2>
        <ul class="mt-1 pl-[6px]">
          <li class="flex h-[42px] items-center gap-[6px]"><svg class="h-8 w-[30px]" viewBox="0 0 30 32"><path d="M13 0h5v31h-5z" fill="#d4d7db"/><path d="M3 9l25-4M3 19l25-4M3 29l25-4" stroke="#2c2c2c" stroke-width="5"/><path d="M3 8l25-4M3 18l25-4M3 28l25-4" stroke="#f2f3f5" stroke-width="4"/><path d="M3 1l12 1M3 12l25 1M3 22l25 1" stroke="#8d9298"/></svg>圆柱形螺旋</li>
          <li class="flex h-[42px] items-center gap-[6px]"><svg class="h-7 w-[30px]" viewBox="0 0 30 28" fill="none" stroke="#c6c6c6"><path d="M14 14c0-2 3-2 3 0 0 4-6 4-6 0 0-6 9-6 9 0 0 8-12 8-12 0C8 4 23 4 23 14c0 12-18 12-18 0C5 0 26 0 26 14c0 15-24 15-24 0C2-3 28-3 28 14c0 3 0 5-1 7"/></svg>二维螺旋</li>
          <li class="flex h-[42px] items-center gap-[6px]"><svg class="h-8 w-[30px]" viewBox="0 0 30 32"><path d="M3 5c0 0 4-4 11-2 7 1 12 4 12 6v20c-6 3-19 0-23-6z" fill="url(#metal)" stroke="#333"/><path d="M3 5c0 0 4-4 11-2 7 1 12 4 12 6-6 3-19 0-23-4z" fill="#fafafa"/></svg>椭圆形圆柱体</li>
          <li class="flex h-[42px] items-center gap-[6px]"><svg class="h-8 w-[30px]" viewBox="0 0 30 32"><path d="M11 5c1-2 7-2 8 0l10 20c-3 6-24 6-27 0z" fill="url(#metal)" stroke="#333"/><ellipse cx="15" cy="5" rx="4" ry="2" fill="#fff"/></svg>平截面圆锥体</li>
          <li class="flex h-[42px] items-center gap-[6px]"><svg class="h-8 w-[30px]" viewBox="0 0 30 32"><path d="M11 4l4-2 4 2 10 19-14 8L1 23z" fill="#c6cacf" stroke="#333"/><path d="M11 4l4 2v25L1 23z" fill="#e0e2e6"/><path d="M11 4l4-2 4 2-4 2z" fill="#fff"/></svg>平截头棱锥体</li>
          <li class="flex h-[42px] items-center gap-[6px]"><svg class="h-8 w-[30px]" viewBox="0 0 30 32"><path d="M3 28L20 11" stroke="#4f86d8" stroke-width="1.500"/><path d="M3.500 5v23.500H26" fill="none" stroke="#f0f0f0" stroke-width="1.300"/><path d="M3.500 2L1 7h5zM29 28.500L24 26v5z" fill="#f0f0f0"/></svg>UCS</li>
          <li class="flex h-[42px] items-center gap-[6px]"><svg class="h-8 w-[30px]" viewBox="0 0 30 32"><path d="M3.500 5v23.500H26" fill="none" stroke="#cfcfcf"/><path d="M3.500 2L1 7h5zM29 28.500L24 26v5z" fill="#cfcfcf"/><path d="M14 12h5c5 0 5 7 0 7" fill="none" stroke="#cfcfcf" stroke-width="2.200"/><path d="M11 9v7h7z" fill="#cfcfcf"/></svg>上一个 UCS</li>
          <li class="flex h-[42px] items-center gap-[6px]"><svg class="h-8 w-[30px]" viewBox="0 0 30 32"><path d="M4 7l3-3v22l-3 4z" fill="#7d8a9a" stroke="#222"/><path d="M8 8l2-2h7v9l-2 2H8z" fill="#a5c6f0" stroke="#2f4a70"/><path d="M8 8h7v8M15 8l2-2" fill="none" stroke="#e6f0fb"/><path d="M8 19l3-2h15v6l-3 3H8z" fill="#e8eaed" stroke="#222"/></svg>三维对齐</li>
        </ul>
      </div>
    </aside>
  </div>

  <script>
    // grid lines, every fifth one is a major line
    const grid = document.getElementById('grid');
    const step = 8.03;
    let minor = '';
    let major = '';

    for (let i = 0; i < 260; i++) {
      const x = Math.floor(2 + i * step) + 0.5;
      const y = Math.floor(i * step) + 0.5;
      if (i % 5 === 1) major += `M${x} 0V2000`;
      else minor += `M${x} 0V2000`;
      if (i % 5 === 2) major += `M0 ${y}H2100`;
      else minor += `M0 ${y}H2100`;
    }

    grid.innerHTML = `<path d="${minor}" stroke="#595960" fill="none"/><path d="${major}" stroke="#4a4e66" fill="none"/>`;
  </script>
</body>
</html>
